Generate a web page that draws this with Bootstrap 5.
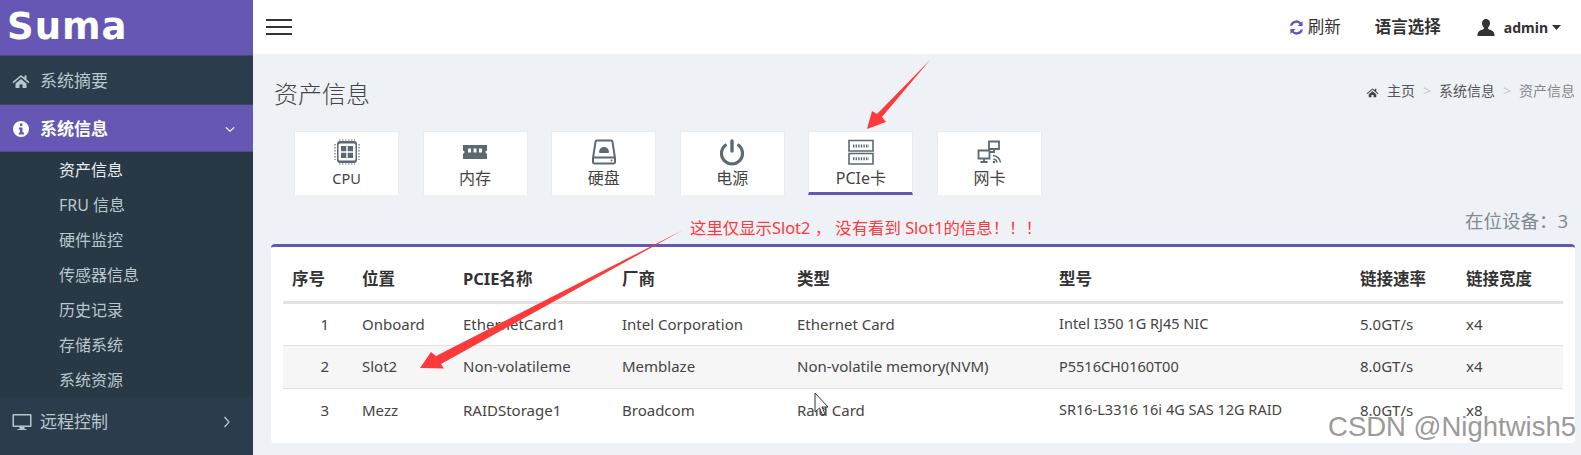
<!DOCTYPE html>
<html lang="zh-CN">
<head>
    <meta charset="UTF-8">
    <meta name="viewport" content="width=device-width, initial-scale=1.0">
    <title>资产信息</title>
    <link href="https://cdn.jsdelivr.net/npm/bootstrap@5.3.0/dist/css/bootstrap.min.css" rel="stylesheet">
    <script src="https://cdn.jsdelivr.net/npm/bootstrap@5.3.0/dist/js/bootstrap.bundle.min.js"></script>
    <style>
        html, body {
            height: 455px;
            overflow: hidden;
        }
        body {
            font-family: "Noto Sans", "Noto Sans CJK SC", sans-serif;
            font-size: 15px;
            background-color: #eef1f6;
            color: #444;
            position: relative;
        }
        .side-panel {
            width: 253px;
            height: 455px;
            background-color: #283845;
            color: #b8c7ce;
            flex-shrink: 0;
        }
        .brand-box {
            height: 56px;
            background-color: #6557b3;
            color: #fff;
            font-family: "DejaVu Sans", sans-serif;
            font-weight: 700;
            font-size: 37px;
            line-height: 54px;
            padding-left: 7px;
            letter-spacing: 1px;
            border-bottom: 1px solid #4c4a80;
        }
        .menu-top {
            height: 49px;
            padding: 2px 12px 0;
            font-size: 17px;
            color: #b8c7ce;
            border-bottom: 1px solid #3a4a5c;
            background-color: #2b3d4c;
        }
        .menu-top.is-open {
            height: 47px;
            padding-right: 18px;
            background-color: #6557b3;
            color: #fff;
            font-weight: 700;
            border-bottom-color: #4f4a8c;
        }
        .menu-top.is-low {
            height: 58px;
            padding-right: 22px;
            padding-bottom: 10px;
            border-bottom: 0;
        }
        .menu-top svg {
            flex-shrink: 0;
            fill: currentColor;
        }
        .menu-label {
            margin-left: 10px;
            flex-grow: 1;
        }
        .is-low .menu-label {
            margin-left: 8px;
        }
        .menu-sub a {
            display: block;
            height: 35px;
            line-height: 36px;
            padding-left: 59px;
            font-size: 16px;
            color: #b8c7ce;
            text-decoration: none;
        }
        .menu-sub a.is-on {
            color: #e8eef1;
        }
        .top-bar {
            height: 54px;
            background-color: #fff;
            padding-left: 13px;
            padding-right: 20px;
            color: #333;
        }
        .burger {
            width: 26px;
            height: 16px;
            border-top: 2px solid #333;
            border-bottom: 2px solid #333;
            position: relative;
        }
        .burger::after {
            content: "";
            position: absolute;
            left: 0;
            right: 0;
            top: 5px;
            height: 2px;
            background-color: #333;
        }
        .top-word {
            font-size: 16.5px;
            margin-left: 4px;
        }
        .top-lang {
            font-size: 16.5px;
            font-weight: 700;
            color: #333;
            margin-left: 34px;
        }
        .top-user {
            font-size: 14px;
            font-weight: 700;
            color: #333;
            margin-left: 8px;
        }
        .user-icon {
            margin-left: 35px;
        }
        .head-row {
            height: 77px;
            padding: 20px 7px 0 21px;
        }
        .page-name {
            font-size: 24px;
            font-weight: 300;
            color: #444;
            line-height: 40px;
            margin: 0;
        }
        .crumbs {
            font-size: 14px;
            color: #555;
            margin-top: 6px;
        }
        .crumbs .sep {
            color: #ccc;
            margin: 0 8px;
        }
        .crumbs .now {
            color: #888;
        }
        .tile-row {
            padding-left: 41px;
            gap: 23.6px;
            height: 64px;
        }
        .tile {
            width: 105px;
            height: 64px;
            background-color: #fff;
            border: 1px solid #e6ecef;
            border-bottom: 0;
            color: #444;
            padding-top: 6px;
        }
        .tile svg {
            display: block;
            margin: 0 auto;
            height: 28px;
            width: 28px;
        }
        .tile-name {
            display: block;
            text-align: center;
            font-size: 16px;
            line-height: 18px;
            margin-top: 3px;
        }
        .tile-latin {
            font-size: 14.5px;
        }
        .tile.is-on {
            border-bottom: 3px solid #6557b3;
        }
        .count-row {
            height: 49px;
            padding: 12px 14px 0 0;
            font-size: 18.5px;
            color: #7f8a92;
        }
        .table-box {
            margin: 0 7px 0 18px;
            height: 199px;
            background-color: #fff;
            border-top: 3px solid #6557b3;
            border-radius: 4px;
            padding: 12px 12px 0;
        }
        .asset-table {
            table-layout: fixed;
            width: 1280px;
            margin: 0;
            color: #444;
        }
        .asset-table th, .asset-table td {
            padding: 0 9px;
            vertical-align: middle;
            white-space: nowrap;
            overflow: hidden;
            background: transparent;
            box-shadow: none;
        }
        .asset-table thead th {
            height: 43px;
            border-bottom: 3px solid #e3e3e3;
            font-size: 16.5px;
            font-weight: 700;
            color: #333;
        }
        .asset-table tbody td {
            height: 43px;
            border-bottom: 1px solid #e3e3e3;
        }
        .asset-table tbody td:nth-child(6) {
            font-size: 14.5px;
        }
        .asset-table tbody tr:last-child td {
            border-bottom: 0;
        }
        .asset-table tbody tr.is-alt td {
            background-color: #f6f6f6;
        }
        .c-no { width: 70px; }
        .c-pos { width: 101px; }
        .c-name { width: 159px; }
        .c-ven { width: 175px; }
        .c-type { width: 262px; }
        .c-model { width: 301px; }
        .c-rate { width: 106px; }
        .note-text {
            position: absolute;
            left: 690px;
            top: 218px;
            font-size: 16.4px;
            line-height: 20px;
            color: #fb3b3b;
            white-space: nowrap;
        }
        .arrow-layer {
            position: absolute;
            left: 0;
            top: 0;
            pointer-events: none;
        }
        .mark-text {
            position: absolute;
            right: 5px;
            top: 412px;
            font-family: "Liberation Sans", sans-serif;
            font-size: 27.5px;
            line-height: 30px;
            color: #9a9a9a;
            text-shadow: 0 0 2px #fff, 0 0 2px #fff;
            white-space: nowrap;
        }
    </style>
</head>
<body>
<div class="d-flex">
    <!-- Sidebar -->
    <aside class="side-panel">
        <div class="brand-box">Suma</div>
        <div class="menu-top d-flex align-items-center">
            <svg width="18" height="16" viewBox="0 0 18 16"><path d="M9 2 0.5 9l1 1.2L9 4l7.5 6.2 1-1.2-3-2.5V2.5h-2v2.3zM3.5 10.5 9 6l5.5 4.5V15h-4v-3.5h-3V15h-4z"/></svg>
            <span class="menu-label">系统摘要</span>
        </div>
        <div class="menu-top is-open d-flex align-items-center">
            <svg width="18" height="18" viewBox="0 0 18 18"><path fill-rule="evenodd" d="M9 1a8 8 0 1 0 0 16A8 8 0 0 0 9 1zM8 3.500h2.400v2.500H8zM6.800 7.500H10.500v5H12V14.500H6.800V12.500H8V9.500H6.800z"/></svg>
            <span class="menu-label">系统信息</span>
            <svg width="10" height="7" viewBox="0 0 12 8"><path d="M1 1.500 6 6l5-4.500" fill="none" stroke="currentColor" stroke-width="1.300"/></svg>
        </div>
        <nav class="menu-sub">
            <a class="is-on" href="#">资产信息</a>
            <a href="#">FRU 信息</a>
            <a href="#">硬件监控</a>
            <a href="#">传感器信息</a>
            <a href="#">历史记录</a>
            <a href="#">存储系统</a>
            <a href="#">系统资源</a>
        </nav>
        <div class="menu-top is-low d-flex align-items-center">
            <svg width="20" height="18" viewBox="0 0 20 18"><path fill-rule="evenodd" d="M1.500 1h17A1 1 0 0 1 19.500 2v11a1 1 0 0 1-1 1h-6v2h2v1h-9v-1h2v-2h-6A1 1 0 0 1 .5 13V2A1 1 0 0 1 1.500 1zM2 2.500V12.500H18V2.500z"/></svg>
            <span class="menu-label">远程控制</span>
            <svg width="8" height="12" viewBox="0 0 8 12"><path d="M1.500 1 6 6l-4.500 5" fill="none" stroke="currentColor" stroke-width="1.300"/></svg>
        </div>
    </aside>

    <main class="flex-grow-1">
        <!-- Top bar -->
        <div class="top-bar d-flex align-items-center">
            <div class="burger"></div>
            <div class="ms-auto d-flex align-items-center">
                <svg width="15" height="15" viewBox="0 0 16 16"><path fill="#6557b3" d="M14.500 1v5.500H9l2.100-2.100A4.600 4.600 0 0 0 3.500 6H1A7 7 0 0 1 12.900 2.600zM1.500 15V9.500H7L4.900 11.600A4.600 4.600 0 0 0 12.500 10H15A7 7 0 0 1 3.100 13.400z"/></svg>
                <span class="top-word">刷新</span>
                <span class="top-lang">语言选择</span>
                <svg class="user-icon" width="20" height="17" viewBox="0 0 20 17"><path fill="#333" d="M10 0c2.500 0 4 1.800 4 4.300 0 1.700-.8 3.200-1.800 4.200v1.500c1.500.8 6.300 1.700 6.300 5.500v1.500H1.500V15.500c0-3.800 4.800-4.700 6.300-5.500V8.500C6.800 7.500 6 6 6 4.300 6 1.800 7.500 0 10 0z"/></svg>
                <span class="top-user">admin</span>
                <svg class="ms-1" width="10" height="5" viewBox="0 0 10 5"><path fill="#333" d="M0 0h9L4.500 5z"/></svg>
            </div>
        </div>

        <!-- Page head -->
        <div class="head-row d-flex justify-content-between">
            <h1 class="page-name">资产信息</h1>
            <div class="crumbs">
                <svg width="13" height="11" viewBox="0 0 18 16"><path fill="#444" d="M9 2 0.500 9l1 1.200L9 4l7.500 6.200 1-1.200-3-2.500V2.500h-2v2.300zM3.500 10.500 9 6l5.500 4.500V15h-4v-3.500h-3V15h-4z"/></svg>
                <span class="ms-1">主页</span><span class="sep">&gt;</span><span>系统信息</span><span class="sep">&gt;</span><span class="now">资产信息</span>
            </div>
        </div>

        <!-- Tiles -->
        <div class="tile-row d-flex">
            <div class="tile">
                <svg viewBox="0 0 28 28"><path fill="#5b6a72" fill-rule="evenodd" d="M7 3h14a3 3 0 0 1 3 3v16a3 3 0 0 1-3 3H7a3 3 0 0 1-3-3V6a3 3 0 0 1 3-3zM7 5.500A1.500 1.500 0 0 0 5.500 7v14A1.500 1.500 0 0 0 7 22.500h14a1.500 1.500 0 0 0 1.500-1.500V7A1.500 1.500 0 0 0 21 5.500zM8 8h5.300v5.300H8zM14.700 8H20v5.300H14.700zM8 14.700h5.300V20H8zM14.700 14.700H20V20H14.700z"/><path stroke="#5b6a72" stroke-width="1.200" stroke-dasharray="1.400 1.600" d="M6 2h16M6 26h16M2 6v16M26 6v16" fill="none"/></svg>
                <span class="tile-name tile-latin">CPU</span>
            </div>
            <div class="tile">
                <svg viewBox="0 0 28 28"><path fill="#5b6a72" fill-rule="evenodd" d="M2 7h24v5.500a1.500 1.500 0 0 0 0 3V21H2v-5.500a1.500 1.500 0 0 0 0-3zM7 10.500v4h3v-4zM12.500 10.500v4h3v-4zM18 10.500v4h3v-4z"/></svg>
                <span class="tile-name">内存</span>
            </div>
            <div class="tile">
                <svg viewBox="0 0 28 28"><path fill="none" stroke="#5b6a72" stroke-width="2" d="M7 2.500h14a1.500 1.500 0 0 1 1.500 1.300L25 20v4a1.500 1.500 0 0 1-1.500 1.500h-19A1.500 1.500 0 0 1 3 24v-4L5.500 3.800A1.500 1.500 0 0 1 7 2.500zM3 19.500h22"/><path fill="#5b6a72" d="M9 14a5 5 0 0 1 10 0 1 1 0 0 1-1 1h-8a1 1 0 0 1-1-1z"/><circle cx="21.500" cy="22.500" r="1" fill="#5b6a72"/></svg>
                <span class="tile-name">硬盘</span>
            </div>
            <div class="tile">
                <svg viewBox="0 0 28 28"><path fill="none" stroke="#5b6a72" stroke-width="3.200" d="M8.500 6.500a10.500 10.500 0 1 0 11 0"/><path stroke="#5b6a72" stroke-width="3.400" stroke-linecap="round" d="M14 3v10"/></svg>
                <span class="tile-name">电源</span>
            </div>
            <div class="tile is-on">
                <svg viewBox="0 0 28 28"><path fill="none" stroke="#5b6a72" stroke-width="1.600" d="M2 2.500h24v10.500H2zM2 15.500h24V26H2z"/><path stroke="#5b6a72" stroke-width="3" stroke-dasharray="1.400 1.200" d="M6 8h16M6 20.800h16" fill="none"/></svg>
                <span class="tile-name">PCIe卡</span>
            </div>
            <div class="tile">
                <svg viewBox="0 0 28 28"><path fill="none" stroke="#5b6a72" stroke-width="1.800" d="M14 3.500h10v7.500H14zM3.500 12.500h11v8h-11zM19 11v3h-4.500M9 20.500v3M5.500 24h7"/><path fill="none" stroke="#5b6a72" stroke-width="1.500" d="M18 17.500a8 8 0 0 1 7.500 7M18.500 21a4 4 0 0 1 3.500 3.500"/><circle cx="19" cy="24" r="1.300" fill="#5b6a72"/></svg>
                <span class="tile-name">网卡</span>
            </div>
        </div>

        <div class="count-row text-end">在位设备：3</div>

        <!-- Table -->
        <div class="table-box">
            <table class="table asset-table">
                <colgroup>
                    <col class="c-no"><col class="c-pos"><col class="c-name"><col class="c-ven"><col class="c-type"><col class="c-model"><col class="c-rate"><col>
                </colgroup>
                <thead>
                <tr>
                    <th>序号</th><th>位置</th><th>PCIE名称</th><th>厂商</th><th>类型</th><th>型号</th><th>链接速率</th><th>链接宽度</th>
                </tr>
                </thead>
                <tbody>
                <tr>
                    <td class="text-end pe-4">1</td><td>Onboard</td><td>EthernetCard1</td><td>Intel Corporation</td><td>Ethernet Card</td><td>Intel I350 1G RJ45 NIC</td><td>5.0GT/s</td><td>x4</td>
                </tr>
                <tr class="is-alt">
                    <td class="text-end pe-4">2</td><td>Slot2</td><td>Non-volatileme</td><td>Memblaze</td><td>Non-volatile memory(NVM)</td><td>P5516CH0160T00</td><td>8.0GT/s</td><td>x4</td>
                </tr>
                <tr>
                    <td class="text-end pe-4">3</td><td>Mezz</td><td>RAIDStorage1</td><td>Broadcom</td><td>Raid Card</td><td>SR16-L3316 16i 4G SAS 12G RAID</td><td>8.0GT/s</td><td>x8</td>
                </tr>
                </tbody>
            </table>
        </div>
    </main>
</div>

<!-- Annotations over the screenshot -->
<svg class="arrow-layer" width="1581" height="455" viewBox="0 0 1581 455">
    <path fill="#fb3b3b" d="M930 60 882 117 886 122 867 129 872 111 877 114z"/>
    <path fill="#fb3b3b" d="M683 230 441 364 444 368.500 420 368 431 352 436 356z"/>
    <path fill="#fff" stroke="#333" stroke-width="1" d="M815 393v19l4.500-4 3 7 2.500-1-3-7h6z"/>
</svg>
<div class="note-text">这里仅显示Slot2 ， 没有看到 Slot1的信息！！！</div>
<div class="mark-text">CSDN @Nightwish5</div>
</body>
</html>
